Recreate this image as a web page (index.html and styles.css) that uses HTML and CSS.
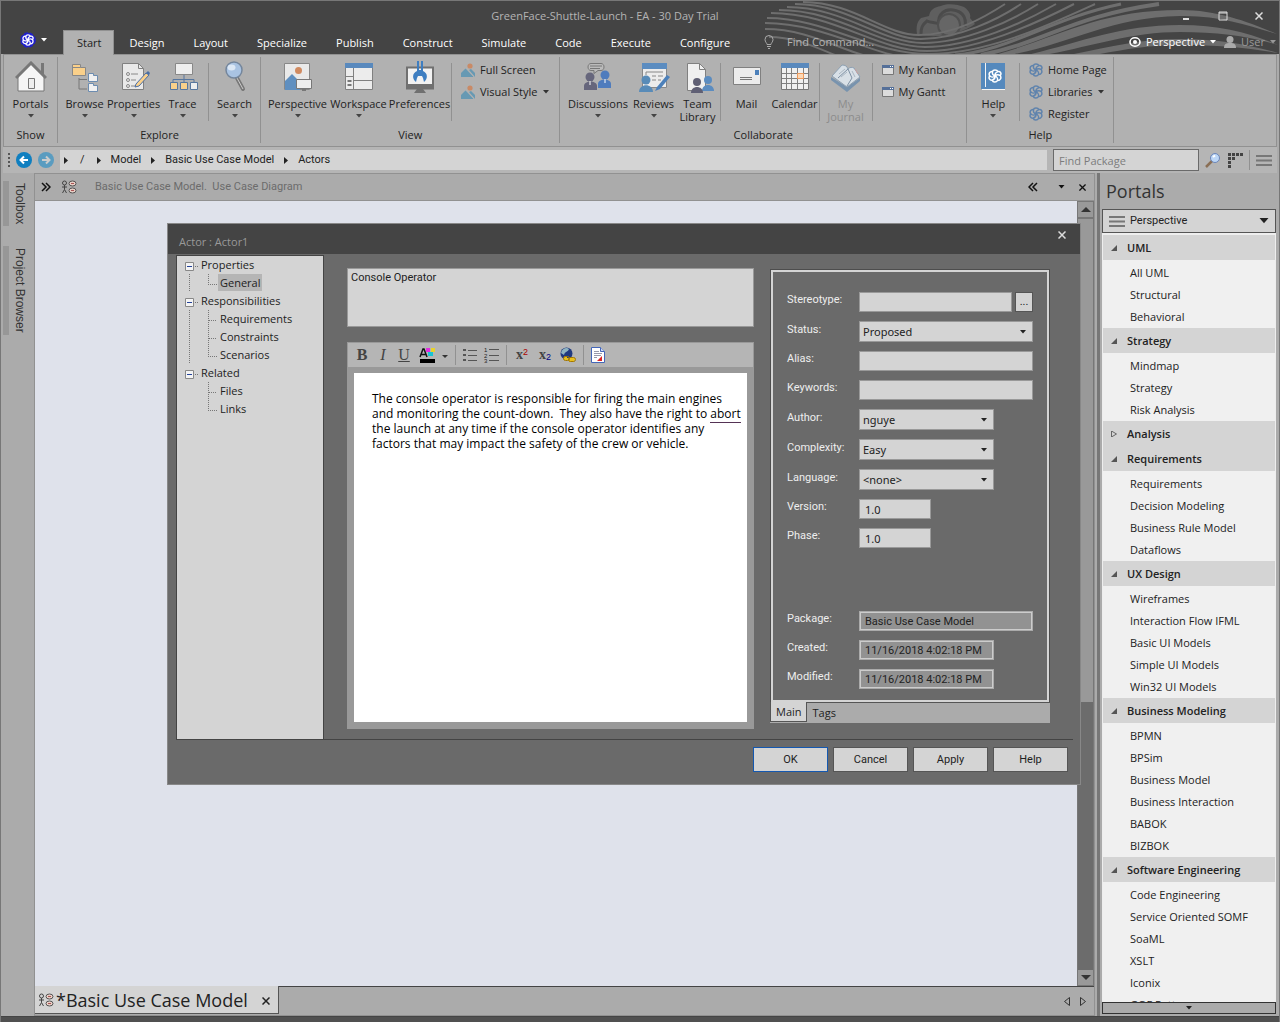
FILE: index.html
```html
<!DOCTYPE html>
<html lang="en">
<head>
<meta charset="utf-8">
<title>GreenFace-Shuttle-Launch - EA - 30 Day Trial</title>
<link rel="stylesheet" href="styles.css">
</head>
<body>
<svg class="defs" aria-hidden="true">
  <symbol id="down" viewBox="0 0 6 4"><path d="M0 0h6L3 3.5z" fill="currentColor"/></symbol>
  <symbol id="right" viewBox="0 0 4 7"><path d="M0 0l4 3.5L0 7z" fill="currentColor"/></symbol>
  <symbol id="close" viewBox="0 0 8 8"><path d="M.5.5l7 7M7.5.5l-7 7" stroke="currentColor" stroke-width="1.5" fill="none"/></symbol>
  <symbol id="lines" viewBox="0 0 16 11"><path d="M0 1h16M0 5.5h16M0 10h16" stroke="#777" stroke-width="2"/></symbol>
  <symbol id="knot" viewBox="0 0 14 14">
    <g fill="none" stroke="currentColor" stroke-width="1.5">
      <path d="M4.500 2.500C5 .5 9 .5 9.800 2.600 12.500 2 13.800 4.500 12.300 6.500c1.400 2.500 0 5.200-2.800 5-1.200 2.200-4.600 2-5.200-.3C1.400 11.500.3 8.800 1.700 7 .3 4.600 1.800 2.200 4.500 2.500z"/>
      <path d="M4.500 2.500C4 5 5.500 6.500 7 7s3 2.500 2.500 4.500M12.300 6.500C9.500 5 8 6 7 7s-3.500 1.500-5.300 0M9.800 2.600C7.500 3.500 6.800 5.500 7 7s-1 3.500-2.700 4.200"/>
    </g>
  </symbol>
  <symbol id="picture" viewBox="0 0 14 14">
    <circle cx="9" cy="3" r="2.600" fill="#c98a66"/><path d="M0 14V10l4.500-4.500L13 14z" fill="#6799b3"/><path d="M8 7l2-1 4 4v4z" fill="#6799b3"/><path d="M7 7l6 7" stroke="#b1b1b1"/>
  </symbol>
  <symbol id="pane" viewBox="0 0 12 10"><path d="M.5.5h11v9H.5z" fill="#dcdcdc" stroke="#777"/><path d="M0 0h12v3H0z" fill="#557099"/><path d="M8 1h1v1H8zM10 1h1v1h-1z" fill="#fff"/></symbol>
  <symbol id="usecase" viewBox="0 0 16 14"><g fill="none" stroke="#444"><circle cx="3.500" cy="3" r="2"/><path d="M3.500 5v4.500M1 7h5M3.500 9.500L1.500 13M3.500 9.500L5.500 13"/></g><g fill="#e8cfc6" stroke="#555"><ellipse cx="11.500" cy="3.500" rx="3.500" ry="2.500"/><ellipse cx="11.500" cy="10.500" rx="3.500" ry="2.500"/></g><path d="M10 3.500h3M10 10.500h3" stroke="#a55"/></symbol>
  <symbol id="open" viewBox="0 0 6 6"><path d="M6 0v6H0z" fill="#555"/></symbol>
  <symbol id="root" viewBox="0 0 24 18"><path d="M8.500 6.500h8v8h-8z" fill="#f4f4f4" stroke="#888"/><path d="M10 10.500h5" stroke="#24439a"/><path d="M18 10.500h1M20 10.500h1" stroke="#777"/></symbol>
  <symbol id="vline" viewBox="0 0 24 18"><path d="M12.500 0v18" stroke="#777" stroke-dasharray="1 1"/></symbol>
  <symbol id="tee" viewBox="0 0 17 18"><path d="M7.500 0v18M8 10.500h8" stroke="#777" stroke-dasharray="1 1"/></symbol>
  <symbol id="elbow" viewBox="0 0 17 18"><path d="M7.500 0v10M7 10.500h9" stroke="#777" stroke-dasharray="1 1"/></symbol>
</svg>

<div class="window">
  <header class="titlebar">
    <svg class="swirl" viewBox="0 0 520 54" preserveAspectRatio="xMaxYMin slice" aria-hidden="true">
      <path d="M158 33c-1-8 0-12 4-16l8-2c1-6 5-9 12-10 5-3 17-2 23 1 6 4 7 9 6 11l5 6c-12 9-38 16-58 10z" fill="#5f5f5f"/>
      <path d="M162 33c0-6 1-9 6-13 4 2 8 1 12 3-2-10 6-15 14-14s14 6 12 17" fill="none" stroke="#4b4b4b" stroke-width="3"/>
      <circle cx="190" cy="24" r="11" fill="#666" stroke="#505050" stroke-width="2"/>
      <g fill="none" stroke="#6e6e6e">
        <g stroke-width="2">
          <path d="M44 1C95 1 125 34 160 34S226 16 246 3"/>
          <path d="M36 3C90 3 125 38 162 38S240 18 262 3"/>
          <path d="M28 6C85 6 122 42 164 42S252 20 279 3"/>
          <path d="M20 9C80 9 120 46 166 46S264 22 297 3"/>
          <path d="M12 12C75 12 118 50 168 50S278 22 315 3"/>
          <path d="M8 17C68 17 112 53 170 53S290 24 336 3"/>
          <path d="M6 22C56 22 100 46 134 54M6 28C46 28 76 46 104 54M10 36C36 36 56 46 76 54"/>
        </g>
        <path d="M196 54C250 50 290 18 362 3" stroke-width="3"/>
        <path d="M222 54C290 40 310 16 400 3" stroke-width="4"/>
      </g>
      <g fill="#6e6e6e">
        <path d="M236 54C300 36 340 9 421 9 460 9 492 22 518 33 490 25 460 14 421 15 350 16 310 44 250 54z"/>
        <path d="M268 54C320 42 360 24 421 24c40 0 70 8 98 20-30-9-60-13-98-13-50 0-90 15-136 23z"/>
        <path d="M310 54c40-8 70-16 111-16 40 0 70 6 98 14-30-5-60-8-98-8-30 0-60 5-85 10z"/>
      </g>
    </svg>
    <div class="caption">
      <h1>GreenFace-Shuttle-Launch - EA - 30 Day Trial</h1>
      <div class="winbtns">
        <button aria-label="Minimize"><svg width="10" height="10"><path d="M2 8h6" stroke="#ddd" stroke-width="2"/></svg></button>
        <button aria-label="Maximize"><svg width="10" height="10"><path d="M1 1h8v8H1zM1 2h8" stroke="#ddd" fill="none"/></svg></button>
        <button aria-label="Close"><svg width="8" height="8"><use href="#close"/></svg></button>
      </div>
    </div>
    <nav class="tabs">
      <button class="app" aria-label="Application menu"><svg width="16" height="16" viewBox="0 0 16 16"><circle cx="8" cy="8" r="7" fill="#1d1dd6"/><circle cx="8" cy="8" r="7.300" fill="none" stroke="#1d1dd6" stroke-dasharray="4 2"/><use href="#knot" x="2" y="2" width="12" height="12" color="#fff"/></svg><svg width="6" height="4"><use href="#down"/></svg></button>
      <button class="tab active">Start</button><button class="tab">Design</button><button class="tab">Layout</button><button class="tab">Specialize</button><button class="tab">Publish</button><button class="tab">Construct</button><button class="tab">Simulate</button><button class="tab">Code</button><button class="tab">Execute</button><button class="tab">Configure</button>
      <label class="findcmd"><svg width="10" height="14" viewBox="0 0 10 14"><path d="M3 9.500C3 8 1 7 1 4.500a4 4 0 0 1 8 0C9 7 7 8 7 9.500z" fill="none" stroke="#aaa"/><path d="M3 11.500h4M4 13.500h2" stroke="#aaa"/></svg><input type="text" placeholder="Find Command..." aria-label="Find Command"></label>
      <div class="account">
        <button class="persp"><svg width="12" height="12" viewBox="0 0 12 12"><ellipse cx="6" cy="6" rx="5" ry="4.200" fill="none" stroke="#fff" stroke-width="1.600"/><circle cx="6" cy="6" r="2" fill="#fff"/></svg>Perspective<svg width="6" height="4"><use href="#down"/></svg></button>
        <button class="user"><svg width="12" height="12" viewBox="0 0 12 12"><circle cx="6" cy="3.500" r="3.500" fill="#aaa"/><path d="M0 12c0-4 2-5 6-5s6 1 6 5z" fill="#aaa"/></svg>User<svg width="6" height="4"><use href="#down"/></svg></button>
      </div>
    </nav>
  </header>

  <section class="ribbon">
    <div class="group">
      <div class="items">
        <button class="big"><svg width="32" height="32" viewBox="0 0 32 32"><path d="M26 2h3v12h-3z" fill="#777"/><path d="M3 16L16 3l13 13v14H3z" fill="#f5f5f5" stroke="#777"/><path d="M1 17L16 2l15 15" fill="none" stroke="#777" stroke-width="3"/><path d="M13.500 17.500h6v10h-6z" fill="#eee" stroke="#777"/></svg><span>Portals</span><svg class="ar"><use href="#down"/></svg></button>
      </div>
      <h2>Show</h2>
    </div>
    <div class="group">
      <div class="items">
        <button class="big"><svg width="32" height="32" viewBox="0 0 32 32"><path d="M10 17v11h8M10 18.500h8" fill="none" stroke="#777"/><path d="M3.500 14.500v-11h8v3h5v8z" fill="#fad08a" stroke="#888"/><path d="M3.500 6.500h8" stroke="#888"/><path d="M19.500 20.500v-8h5v2h4v6zM19.500 30.500v-8h5v2h4v6z" fill="#f0f0f0" stroke="#6c8cb0"/></svg><span>Browse</span><svg class="ar"><use href="#down"/></svg></button>
        <button class="big"><svg width="32" height="32" viewBox="0 0 32 32"><path d="M4.500 2.500h16l5 5v21h-21z" fill="#e9e9e9" stroke="#808080"/><path d="M20.500 2.500v5h5" fill="none" stroke="#808080"/><g stroke="#888" fill="none"><circle cx="10" cy="13" r="1.500"/><circle cx="10" cy="19" r="1.500"/><circle cx="10" cy="25" r="1.500"/><path d="M13 13h7M13 19h5M13 25h4"/></g><path d="M18 23l10-11 3 2-10 11-4 1z" fill="#fad08a" stroke="#4a6ea4"/><path d="M28 12l2-2 2 2-1 2z" fill="#4a6ea4"/></svg><span>Properties</span><svg class="ar"><use href="#down"/></svg></button>
        <button class="big"><svg width="32" height="32" viewBox="0 0 32 32"><path d="M8.500 2.500h17v11h-17z" fill="#eee" stroke="#888"/><path d="M17 14v7M6 21v-2.500h21V21" fill="none" stroke="#58779f"/><path d="M3.500 21.500h7v7h-7zM13.500 21.500h7v7h-7z" fill="#fad08a" stroke="#58779f"/><path d="M23.500 21.500h7v7h-7z" fill="#eee" stroke="#58779f"/></svg><span>Trace</span><svg class="ar"><use href="#down"/></svg></button>
        <i class="sep"></i>
        <button class="big"><svg width="32" height="32" viewBox="0 0 32 32"><path d="M18 17l6 11" stroke="#777" stroke-width="4" stroke-linecap="round"/><path d="M18 17l6 11" stroke="#ccc" stroke-width="1"/><circle cx="15" cy="9" r="8" fill="#a9c3e2" stroke="#74869c" stroke-width="1.500"/><ellipse cx="12.500" cy="6.500" rx="4" ry="3" fill="#dce8f5"/></svg><span>Search</span><svg class="ar"><use href="#down"/></svg></button>
      </div>
      <h2>Explore</h2>
    </div>
    <div class="group">
      <div class="items wide">
        <button class="big"><svg width="32" height="32" viewBox="0 0 32 32"><path d="M2.500 2.500h25v26h-25z" fill="#e9e9e9" stroke="#888"/><circle cx="16.500" cy="9.500" r="3.500" fill="#d08a60"/><path d="M3 29V20l7-7 8 8v8z" fill="#5f8fc0"/><path d="M14.500 18.500h15v9h-15z" fill="#eee" stroke="#777"/><path d="M20 28h4v2h-4z" fill="#777"/></svg><span>Perspective</span><svg class="ar"><use href="#down"/></svg></button>
        <button class="big"><svg width="32" height="32" viewBox="0 0 32 32"><path d="M2.500 2.500h27v26h-27z" fill="#ececec" stroke="#808080"/><path d="M2 2h28v5H2z" fill="#5989bd"/><path d="M10.500 7v21M3 15.500h7M11 19.500h18" stroke="#808080"/><path d="M4.500 20h4M4.500 24h4" stroke="#777" stroke-width="2"/></svg><span>Workspace</span><svg class="ar"><use href="#down"/></svg></button>
        <button class="big"><svg width="32" height="32" viewBox="0 0 32 32"><path d="M3 6.500h26v21H3z" fill="#f2f2f2" stroke="#707070" stroke-width="2"/><path d="M2 23h28v5H2zM13 28h6l3 4H10z" fill="#707070"/><path d="M13 0h2v9h2V0h2v10c5 2 5 8 1 11l-1-4-1-2h-4l-1 2-1 4c-4-3-4-9 1-11z" fill="#3e7ec1"/></svg><span>Preferences</span></button>
        <i class="sep"></i>
        <div class="list"><button><svg width="14" height="14"><use href="#picture"/></svg>Full Screen</button><button><svg width="14" height="14"><use href="#picture"/></svg>Visual Style<svg width="6" height="4"><use href="#down"/></svg></button></div>
      </div>
      <h2>View</h2>
    </div>
    <div class="group">
      <div class="items wide">
        <button class="big w65"><svg width="32" height="32" viewBox="0 0 32 32"><path d="M9 2.500h10c4 0 4 7 0 7h-3l-4 3v-3H9c-4 0-4-7 0-7z" fill="#bbb" stroke="#777"/><path d="M8 5h12M8 7.500h10" stroke="#777"/><circle cx="8" cy="16" r="4.500" fill="#66667c"/><path d="M2 29v-4c0-6 13-6 13 0v4z" fill="#66667c"/><circle cx="23" cy="14" r="4.500" fill="#4f7cbd"/><path d="M16 27v-4c0-6 13-6 13 0v4z" fill="#4f7cbd"/><path d="M8 20v4M23 18v4" stroke="#fff"/></svg><span>Discussions</span><svg class="ar"><use href="#down"/></svg></button>
        <button class="big w46"><svg width="32" height="32" viewBox="0 0 32 32"><path d="M4.500 2.500h24v24h-24z" fill="#ececec" stroke="#888"/><path d="M4 2h25v6H4z" fill="#5b8cc0"/><path d="M8 11h17M14 15h4M20 15h5M14 19h4M20 19h3M8 11v3" stroke="#888"/><circle cx="8" cy="19" r="4.500" fill="#588bb8"/><path d="M1 31c0-9 14-9 14 0z" fill="#588bb8"/><path d="M19 26L29 14l3 2-10 12-5 2z" fill="#4c80ba"/></svg><span>Reviews</span><svg class="ar"><use href="#down"/></svg></button>
        <button class="big w42"><svg width="32" height="32" viewBox="0 0 32 32"><path d="M5.500 2.500h12l6 6v21h-18z" fill="#f0f0f0" stroke="#808080"/><path d="M17.500 2.500v6h6" fill="none" stroke="#808080"/><circle cx="26" cy="19" r="4" fill="#5b8cc0"/><path d="M20 30c0-8 12-8 12 0z" fill="#5b8cc0"/><circle cx="15" cy="21" r="4" fill="#5f5f74"/><path d="M9 32c0-8 12-8 12 0z" fill="#5f5f74"/></svg><span>Team<br>Library</span></button>
        <i class="sep"></i>
        <button class="big w50"><svg width="32" height="32" viewBox="0 0 32 32"><path d="M2.500 6.500h27v17h-27z" fill="#ececec" stroke="#808080"/><path d="M24 9h4v5h-4z" fill="#4c80ba"/><path d="M9 16.500h12M9 18.500h12" stroke="#777"/></svg><span>Mail</span></button>
        <button class="big w46"><svg width="32" height="32" viewBox="0 0 32 32"><path d="M2.500 2.500h27v26h-27z" fill="#f0f0f0" stroke="#777"/><path d="M2 2h28v5H2z" fill="#5989bd"/><path d="M7.500 7v21M12.500 7v21M18.500 7v21M24.500 7v21M3 12.500h26M3 17.500h26M3 22.500h26" stroke="#808080"/><path d="M18.500 12.500h6v5h-6z" fill="#fbd9b8" stroke="#f09a5b"/></svg><span>Calendar</span></button>
        <i class="sep"></i>
        <button class="big w50" disabled><svg width="32" height="32" viewBox="0 0 32 32"><path d="M1 16l16 10 13-9v3L17 31 1 19z" fill="#7893ae"/><path d="M2 15L12 4c3 0 5 1 6 4 2-2 4-2 6-1l6 9-13 10z" fill="#d8e0e7" stroke="#8da0b2"/><path d="M18 8L8 17M18 8l4 9-5 8" fill="none" stroke="#7d90a4"/><path d="M9 13l6-5M11 16l6-5M22 10l3 6" stroke="#a9b6c2"/><path d="M25 8l3 5" stroke="#c9a0a0"/></svg><span>My<br>Journal</span></button>
        <i class="sep"></i>
        <div class="list"><button><svg width="12" height="10"><use href="#pane"/></svg>My Kanban</button><button><svg width="12" height="10"><use href="#pane"/></svg>My Gantt</button></div>
      </div>
      <h2>Collaborate</h2>
    </div>
    <div class="group">
      <div class="items">
        <button class="big"><svg width="32" height="32" viewBox="0 0 32 32"><path d="M4 2h24v26H4z" fill="#5589bd"/><path d="M8.500 2v24M5 28.500h23" stroke="#f4f4f4"/><use href="#knot" x="11" y="8" width="14" height="14" color="#fff"/></svg><span>Help</span><svg class="ar"><use href="#down"/></svg></button>
        <i class="sep"></i>
        <div class="list knots"><button><svg width="14" height="14"><use href="#knot"/></svg>Home Page</button><button><svg width="14" height="14"><use href="#knot"/></svg>Libraries<svg width="6" height="4"><use href="#down"/></svg></button><button><svg width="14" height="14"><use href="#knot"/></svg>Register</button></div>
      </div>
      <h2>Help</h2>
    </div>
  </section>

  <div class="navrow">
    <i class="grip"></i>
    <button aria-label="Back"><svg width="16" height="16"><circle cx="8" cy="8" r="8" fill="#0f7fc0"/><path d="M12 8H4.500M8 4.500L4.500 8 8 11.500" stroke="#fff" stroke-width="2" fill="none"/></svg></button>
    <button aria-label="Forward"><svg width="16" height="16"><circle cx="8" cy="8" r="8" fill="#5a9cc0"/><path d="M4 8h7.500M8 4.500L11.500 8 8 11.500" stroke="#ccc" stroke-width="2" fill="none"/></svg></button>
    <nav class="crumbs">
      <svg width="4" height="7"><use href="#right"/></svg><a href="#" class="slash">/</a><svg width="4" height="7"><use href="#right"/></svg><a href="#">Model</a><svg width="4" height="7"><use href="#right"/></svg><a href="#">Basic Use Case Model</a><svg width="4" height="7"><use href="#right"/></svg><a href="#">Actors</a>
    </nav>
    <input class="findpkg" type="text" placeholder="Find Package" aria-label="Find Package">
    <button aria-label="Search"><svg width="16" height="16"><path d="M1 15l6-6" stroke="#8a6f55" stroke-width="2.500"/><circle cx="10" cy="6" r="4.500" fill="#bcd6f6" stroke="#6c86b8"/><path d="M8 5l2-1.500" stroke="#fff" stroke-width="2"/></svg></button>
    <button aria-label="Options"><svg width="16" height="16"><path d="M1 2.500h15" stroke="#444" stroke-width="3" stroke-dasharray="3 1"/><path d="M2.500 5v11" stroke="#444" stroke-width="3" stroke-dasharray="3 1"/><path d="M5 6.500h3" stroke="#444" stroke-width="3"/></svg></button>
    <i class="vsep"></i>
    <button aria-label="Menu"><svg width="16" height="11"><use href="#lines"/></svg></button>
  </div>

  <div class="main">
    <aside class="dock"><button>Toolbox</button><button>Project Browser</button></aside>

    <section class="center">
      <div class="dochead">
        <svg width="10" height="10"><path d="M1 1l4 4-4 4M5 1l4 4-4 4" fill="none" stroke="#111" stroke-width="1.500"/></svg>
        <svg width="16" height="14"><use href="#usecase"/></svg>
        <span class="doctitle">Basic Use Case Model.&nbsp; Use Case Diagram</span>
        <div class="doctools">
        <button aria-label="Collapse"><svg width="10" height="10"><path d="M5 1L1 5l4 4M9 1L5 5l4 4" fill="none" stroke="#111" stroke-width="1.500"/></svg></button>
        <button aria-label="Windows"><svg width="7" height="4"><use href="#down"/></svg></button>
        <button aria-label="Close diagram"><svg width="7" height="7"><use href="#close"/></svg></button>
        </div>
      </div>
      <div class="canvas">
        <div class="scroll">
          <button aria-label="Scroll up"><svg width="10" height="5"><path d="M0 5l5-5 5 5z" fill="#333"/></svg></button>
          <i class="thumb"></i><i class="trough"></i>
          <button aria-label="Scroll down"><svg width="10" height="5"><path d="M0 0l5 5 5-5z" fill="#333"/></svg></button>
        </div>
      </div>
      <div class="doctabs">
        <button class="doctab"><svg width="16" height="14"><use href="#usecase"/></svg><span>*Basic Use Case Model</span><svg width="8" height="8"><use href="#close"/></svg></button>
        <button aria-label="Previous tab"><svg width="6" height="9"><path d="M5.500.5v8l-5-4z" fill="none" stroke="#333"/></svg></button>
        <button aria-label="Next tab"><svg width="6" height="9"><path d="M.5.5v8l5-4z" fill="none" stroke="#333"/></svg></button>
      </div>

      <form class="dialog" role="dialog" aria-label="Actor : Actor1">
        <div class="dlgtitle"><h2>Actor : Actor1</h2><button type="button" aria-label="Close dialog"><svg width="8" height="8"><use href="#close"/></svg></button></div>
        <div class="dlgbody">
          <ul class="tree">
            <li><svg class="g1"><use href="#root"/></svg>Properties</li>
            <li><svg class="g1"><use href="#vline"/></svg><svg class="g2"><use href="#elbow"/></svg><b class="sel">General</b></li>
            <li><svg class="g1"><use href="#root"/></svg>Responsibilities</li>
            <li><svg class="g1"><use href="#vline"/></svg><svg class="g2"><use href="#tee"/></svg><b>Requirements</b></li>
            <li><svg class="g1"><use href="#vline"/></svg><svg class="g2"><use href="#tee"/></svg><b>Constraints</b></li>
            <li><svg class="g1"><use href="#vline"/></svg><svg class="g2"><use href="#elbow"/></svg><b>Scenarios</b></li>
            <li><svg class="g1"><use href="#root"/></svg>Related</li>
            <li><svg class="g1"></svg><svg class="g2"><use href="#tee"/></svg><b>Files</b></li>
            <li><svg class="g1"></svg><svg class="g2"><use href="#elbow"/></svg><b>Links</b></li>
          </ul>
          <div class="mid">
            <textarea class="name" aria-label="Name">Console Operator</textarea>
            <div class="editor">
              <div class="toolbar">
                <button type="button" class="tb bold">B</button><button type="button" class="tb ital">I</button><button type="button" class="tb und">U</button>
                <button type="button" aria-label="Text colour"><svg width="30" height="16"><path d="M2 10l3-8h1l3 8M3 7.500h5" fill="none" stroke="#111" stroke-width="1.500"/><path d="M2 12h15v4H2z" fill="#000"/><path d="M8 1h4v4H8z" fill="#e12ee1"/><path d="M13 1h4v4h-4z" fill="#e8d22c"/><path d="M10 5h5v4h-5z" fill="#19c5d3"/><path d="M24 8h6l-3 3z" fill="#333"/></svg></button>
                <i class="tsep"></i>
                <button type="button" aria-label="Bullets"><svg width="14" height="14"><path d="M0 2h3M0 7h3M0 12h3" stroke="#555" stroke-width="2"/><path d="M5 2.500h9M5 7.500h9M5 12.500h9" stroke="#555"/></svg></button>
                <button type="button" aria-label="Numbering"><svg width="15" height="16"><text x="0" y="5" class="num">1</text><text x="0" y="11" class="num">2</text><text x="0" y="16" class="num">3</text><path d="M5 2.500h10M5 8.500h10M5 13.500h10" stroke="#555"/></svg></button>
                <i class="tsep"></i>
                <button type="button" class="tb scr">x<sup>2</sup></button><button type="button" class="tb scr sub">x<sub>2</sub></button>
                <button type="button" aria-label="Hyperlink"><svg width="16" height="16"><circle cx="6.500" cy="6.500" r="6" fill="#203a80"/><path d="M1 6c1-5 6-6 8-4-1 3-4 2-5 6z" fill="#8fb4c0"/><path d="M4 12h11M4 10.500h3M9 14h5" stroke="#e8c020" stroke-width="2"/><rect x="3.500" y="9.500" width="6" height="4" rx="2" fill="none" stroke="#a47800"/><rect x="8.500" y="10.500" width="7" height="4" rx="2" fill="none" stroke="#a47800"/></svg></button>
                <i class="tsep"></i>
                <button type="button" aria-label="Glossary"><svg width="14" height="16"><path d="M.5.500h9l4 4v11H.5z" fill="#fff" stroke="#4466b8"/><path d="M9.500.5v4h4" fill="#cdd8f2" stroke="#4466b8"/><path d="M3 4.500h5M3 6.500h8M3 8.500h7M3 10.500h3" stroke="#99a"/><path d="M6 14l5-5v5z" fill="#d22"/></svg></button>
              </div>
              <div class="page" contenteditable="true" spellcheck="false">The console operator is responsible for firing the main engines<br>and monitoring the count-down.&nbsp; They also have the right to <u>abort</u><br>the launch at any time if the console operator identifies any<br>factors that may impact the safety of the crew or vehicle.</div>
            </div>
          </div>
          <div class="props">
            <div class="panel">
              <div class="fields">
                <label for="st">Stereotype:</label><div class="pair"><input id="st" type="text"><button type="button" aria-label="Choose stereotype">...</button></div>
                <label for="su">Status:</label><div class="select"><select id="su"><option>Proposed</option></select><svg><use href="#down"/></svg></div>
                <label for="al">Alias:</label><input id="al" type="text">
                <label for="ke">Keywords:</label><input id="ke" type="text">
                <label for="au">Author:</label><div class="select mw"><select id="au"><option>nguye</option></select><svg><use href="#down"/></svg></div>
                <label for="co">Complexity:</label><div class="select mw"><select id="co"><option>Easy</option></select><svg><use href="#down"/></svg></div>
                <label for="la">Language:</label><div class="select mw"><select id="la"><option>&lt;none&gt;</option></select><svg><use href="#down"/></svg></div>
                <label for="ve">Version:</label><input id="ve" class="sw" type="text" value="1.0">
                <label for="ph">Phase:</label><input id="ph" class="sw" type="text" value="1.0">
              </div>
              <div class="fields ro">
                <label for="pa">Package:</label><input id="pa" type="text" readonly value="Basic Use Case Model">
                <label for="cr">Created:</label><input id="cr" class="mw" type="text" readonly value="11/16/2018 4:02:18 PM">
                <label for="mo">Modified:</label><input id="mo" class="mw" type="text" readonly value="11/16/2018 4:02:18 PM">
              </div>
            </div>
            <div class="ptabs"><button type="button" class="on">Main</button><button type="button">Tags</button></div>
          </div>
        </div>
        <div class="actions"><button type="button" class="default">OK</button><button type="button">Cancel</button><button type="button">Apply</button><button type="button">Help</button></div>
      </form>
    </section>

    <aside class="portals">
      <h2>Portals</h2>
      <button class="combo"><svg width="16" height="11"><use href="#lines"/></svg><span>Perspective</span><svg width="10" height="6"><use href="#down"/></svg></button>
      <div class="plist">
        <h3><svg><use href="#open"/></svg>UML</h3>
        <ul><li><a href="#">All UML</a></li><li><a href="#">Structural</a></li><li><a href="#">Behavioral</a></li></ul>
        <h3><svg><use href="#open"/></svg>Strategy</h3>
        <ul><li><a href="#">Mindmap</a></li><li><a href="#">Strategy</a></li><li><a href="#">Risk Analysis</a></li></ul>
        <h3><svg viewBox="0 0 6 6"><path d="M.5 0v6l5-3z" fill="none" stroke="#666"/></svg>Analysis</h3>
        <h3><svg><use href="#open"/></svg>Requirements</h3>
        <ul><li><a href="#">Requirements</a></li><li><a href="#">Decision Modeling</a></li><li><a href="#">Business Rule Model</a></li><li><a href="#">Dataflows</a></li></ul>
        <h3><svg><use href="#open"/></svg>UX Design</h3>
        <ul><li><a href="#">Wireframes</a></li><li><a href="#">Interaction Flow IFML</a></li><li><a href="#">Basic UI Models</a></li><li><a href="#">Simple UI Models</a></li><li><a href="#">Win32 UI Models</a></li></ul>
        <h3><svg><use href="#open"/></svg>Business Modeling</h3>
        <ul><li><a href="#">BPMN</a></li><li><a href="#">BPSim</a></li><li><a href="#">Business Model</a></li><li><a href="#">Business Interaction</a></li><li><a href="#">BABOK</a></li><li><a href="#">BIZBOK</a></li></ul>
        <h3><svg><use href="#open"/></svg>Software Engineering</h3>
        <ul><li><a href="#">Code Engineering</a></li><li><a href="#">Service Oriented SOMF</a></li><li><a href="#">SoaML</a></li><li><a href="#">XSLT</a></li><li><a href="#">Iconix</a></li><li><a href="#">GOF Patterns</a></li></ul>
      </div>
      <button class="more" aria-label="Scroll list down"><svg width="6" height="4"><use href="#down"/></svg></button>
    </aside>
  </div>
  <footer class="status"></footer>
</div>
</body>
</html>
```
FILE: styles.css
```css
* { box-sizing: border-box; }
body { margin: 0; font: 11px/14px "Open Sans", "Noto Sans", sans-serif; color: #222; background: #ababab; }
.defs { position: absolute; width: 0; height: 0; }
h1, h2, h3, ul { margin: 0; padding: 0; font: inherit; list-style: none; }
button, input, select, textarea { font: inherit; color: inherit; margin: 0; padding: 0; border: 0; background: none; border-radius: 0; outline: 0; }
button { display: flex; align-items: center; justify-content: center; }
a { color: inherit; text-decoration: none; }
svg { flex: none; display: block; }

.window { height: 100vh; display: flex; flex-direction: column; border: 1px solid #777; border-bottom: 0; overflow: hidden; }

/* title bar and ribbon tabs */
.titlebar { position: relative; background: #444; flex: none; }
.swirl { position: absolute; right: 0; top: 0; width: 520px; height: 53px; }
.caption, .tabs { position: relative; display: flex; }
.caption { height: 29px; align-items: center; justify-content: center; color: #b4b4b4; }
.caption h1 { flex: 1; text-align: center; padding-left: 28px; }
.winbtns { display: flex; gap: 27px; padding-right: 16px; }
.winbtns button { color: #ddd; }
.tabs { height: 24px; align-items: center; color: #fff; }
.app { width: 62px; gap: 5px; padding: 0 0 4px 2px; }
.tab { height: 24px; padding: 0 13px 0 14px; border: 1px solid transparent; border-bottom: 0; }
.tab.active { background: #b1b1b1; color: #222; padding: 0 12px 0 13px; border-color: #919191; height: 25px; margin-bottom: -1px; }
.findcmd { display: flex; gap: 13px; align-items: center; margin-left: 20px; }
.findcmd input { width: 100px; }
.findcmd ::placeholder { color: #b4b4b4; opacity: 1; }
.account { margin-left: auto; display: flex; gap: 8px; padding-right: 3px; }
.account button { gap: 5px; }
.account .user { color: #999; }

/* ribbon */
.ribbon { flex: none; display: flex; background: #b1b1b1; border: 1px solid #919191; margin: 0 2px; height: 93px; padding: 2px 0 3px; color: #222; }
.group { border-right: 1px solid #919191; display: flex; flex-direction: column; justify-content: space-between; padding: 4px 1px 1px 2px; }
.group:first-child { padding-right: 2px; }
.group h2 { text-align: center; }
.items { display: flex; align-items: flex-start; }
.items.wide { padding: 0 4px; }
.big { flex: none; flex-direction: column; width: 49px; white-space: nowrap; }
.wide .big { width: 61px; }
.wide .w65 { width: 65px; }
.wide .w50 { width: 50px; }
.wide .w46 { width: 46px; }
.wide .w42 { width: 42px; }
.big span { line-height: 13px; margin-top: 4px; }
.big:disabled { color: #8c8c8c; }
.ar { width: 6px; height: 4px; margin-top: 4px; color: #444; }
.sep { width: 1px; height: 58px; margin: 2px 1px; background: #919191; }
.list { display: flex; flex-direction: column; margin-top: -2px; padding: 0 5px 0 8px; }
.list button { height: 22px; justify-content: flex-start; gap: 5px; }
.list svg { color: #333; }
.list.knots svg:first-child { color: #5f83ad; }

/* navigation row */
.navrow { flex: none; display: flex; align-items: center; height: 26px; margin: 0 2px; padding: 0 5px; gap: 6px; background: #b5b5b5; }
.grip { width: 2px; height: 14px; background: repeating-linear-gradient(#555 0 2px, transparent 2px 4px); }
.crumbs { flex: 1; display: flex; align-items: center; gap: 10px; height: 20px; background: #d4d4d4; padding-left: 4px; font-family: Roboto, sans-serif; color: #222; }
.slash { padding: 0 2px; }
.findpkg { width: 146px; height: 22px; border: 1px solid #6a6a6a; background: #d4d4d4; padding: 0 5px; }
.findpkg::placeholder { color: #7c7c7c; opacity: 1; }
.vsep { width: 1px; height: 20px; background: #919191; }

/* main area */
.main { flex: 1; min-height: 0; display: flex; background: #ababab; }
.dock { width: 33px; display: flex; flex-direction: column; gap: 20px; padding: 8px 0 0 2px; }
.dock button { writing-mode: vertical-rl; justify-content: flex-start; align-self: flex-start; border-left: 6px solid #979797; padding: 2px 4px; font: 12px/14px "Liberation Sans", sans-serif; color: #333; }
.center { position: relative; flex: 1; min-width: 0; display: flex; flex-direction: column; border: 1px solid #919191; border-bottom: 0; margin-right: 2px; }
.dochead { display: flex; align-items: center; height: 27px; padding: 0 8px 0 6px; gap: 10px; border-bottom: 1px solid #919191; color: #6b6b6b; }
.doctitle { flex: 1; padding-left: 8px; font: 11px/14px Roboto, sans-serif; }
.doctools { display: flex; gap: 14px; align-items: center; color: #111; }
.doctools button:first-child { margin-right: 6px; }
.canvas { flex: 1; display: flex; justify-content: flex-end; background: #dfe2eb; }
.scroll { width: 17px; display: flex; flex-direction: column; background: #6c6c6c; border: 1px solid #777; }
.scroll button { height: 15px; background: #999; }
.scroll .thumb { flex: 484; background: #999; border-top: 2px solid #777; }
.scroll .trough { flex: 268; }
.doctabs { display: flex; align-items: center; height: 30px; gap: 10px; padding-right: 8px; border-top: 1px solid #444; border-bottom: 1px solid #919191; }
.doctab { height: 28px; margin: -2px auto 0 0; background: #d4d4d4; border: 1px solid #555; border-width: 0 1px 1px 0; padding: 0 8px 0 3px; gap: 2px; font-size: 18px; line-height: 26px; }
.doctab svg:last-child { margin: 2px 0 0 12px; }

/* dialog */
.dialog { position: absolute; left: 132px; top: 49px; width: 914px; background: #6a6a6a; border: 1px solid #888; font: 11px/14px Roboto, sans-serif; }
.dlgtitle { display: flex; justify-content: space-between; height: 30px; background: #444; color: #999; padding: 6px 14px 0 11px; font: 11px/14px "Open Sans", sans-serif; }
.dlgtitle h2 { padding-top: 5px; }
.dlgtitle button { height: 10px; color: #ddd; }
.dlgbody { display: flex; margin: 1px 7px 0 8px; border-bottom: 1px solid #444; }
.tree { flex: none; width: 148px; border: 1px solid #444; border-bottom: 0; background: #d4d4d4; font: 11px/18px "Open Sans", sans-serif; }
.tree li { display: flex; height: 18px; }
.tree b { font-weight: normal; padding: 0 2px; height: 17px; }
.tree .sel { background: #b5b5b5; }
.g1 { width: 24px; height: 18px; }
.g2 { width: 17px; height: 18px; }
.mid { flex: 1; min-width: 0; margin: 13px 16px 10px 23px; display: flex; flex-direction: column; gap: 15px; }
.name { height: 59px; resize: none; background: #d4d4d4; border: 1px solid #999; padding: 2px 3px; display: block; }
.editor { display: flex; flex-direction: column; flex: 1; background: #999; border: 1px solid #999; }
.toolbar { display: flex; align-items: center; height: 24px; padding: 0 7px; gap: 7px; background: #b5b5b5; color: #444; }
.tb { font: 16px/20px "Liberation Serif", serif; width: 14px; }
.bold { font-weight: bold; }
.ital { font-style: italic; }
.und { text-decoration: underline; }
.scr { font-size: 14px; font-weight: bold; line-height: 14px; width: 16px; }
.scr sup, .scr sub { font: 9px/9px "Liberation Sans", sans-serif; }
.scr sup { color: #a00; align-self: flex-start; }
.scr sub { color: #008; align-self: flex-end; }
.num { font: 6px "Liberation Sans", sans-serif; fill: #222; }
.tsep { width: 1px; height: 20px; background: #919191; }
.page { flex: 1; margin: 6px; padding: 18px 0 0 18px; background: #fff; color: #000; font: 12px/15px "Open Sans", sans-serif; outline: 0; }
.page u { text-decoration: none; border-bottom: 1px solid #535; }
.props { flex: none; width: 280px; margin: 14px 23px 16px 0; display: flex; flex-direction: column; }
.panel { border: 1px solid #4d4d4d; box-shadow: inset 0 0 0 2px #d4d4d4; height: 434px; padding: 22px 16px 13px; display: flex; flex-direction: column; justify-content: space-between; }
.fields { display: grid; grid-template-columns: 72px 1fr; row-gap: 9px; align-items: center; }
.fields label { color: #eee; padding-bottom: 4px; }
.fields input { height: 20px; width: 100%; background: #d4d4d4; border: 1px solid #999; padding: 0 5px; font: 11px/14px "Noto Sans", sans-serif; }
.pair { display: flex; gap: 3px; }
.pair button { width: 18px; flex: none; background: #d4d4d4; border: 1px solid #555; }
.select { display: grid; align-items: center; }
.select select, .select svg { grid-area: 1 / 1; }
.select select { appearance: none; height: 21px; background: #d4d4d4; border: 1px solid #999; padding: 0 3px; font: 11px/14px "Noto Sans", sans-serif; }
.select svg { width: 6px; height: 4px; justify-self: end; margin-right: 7px; pointer-events: none; }
.fields .mw { width: 135px; }
.fields .sw { width: 72px; }
.ro.fields input { background: #929292; border-color: #aaa; box-shadow: inset 0 0 0 1px #ccc; font: 11px/14px Roboto, sans-serif; }
.ptabs { display: flex; height: 21px; background: #ababab; font: 11px/14px "Open Sans", sans-serif; margin-top: -1px; border-top: 1px solid #555; }
.ptabs button { padding: 0 6px; height: 19px; }
.ptabs .on { background: #d4d4d4; border: 1px solid #555; border-top: 0; padding: 0 4px 0 5px; margin-top: -1px; height: 20px; }
.actions { display: flex; justify-content: flex-end; gap: 5px; padding: 7px 12px 12px; }
.actions button { width: 75px; height: 25px; background: #d4d4d4; border: 1px solid #555; }
.actions .default { border-color: #1458b0; }

/* portals */
.portals { width: 182px; flex: none; display: flex; flex-direction: column; padding: 0 3px 2px 2px; border-left: 3px solid #777; }
.portals h2 { font-size: 18px; line-height: 26px; padding: 5px 4px; color: #333; }
.combo { flex: none; height: 24px; background: #d4d4d4; border: 1px solid #555; padding: 0 6px; gap: 5px; }
.combo span { flex: 1; text-align: left; font-family: Roboto, sans-serif; }
.plist { flex: 1; min-height: 0; overflow: hidden; background: #f0f0f0; border: 1px solid #eee; border-width: 2px 1px 0; }
.plist h3 { display: flex; align-items: center; gap: 10px; height: 25px; padding-left: 8px; background: #d4d4d4; font-weight: 600; }
.plist h3 svg { width: 6px; height: 6px; }
.plist ul { padding: 2px 0 0 27px; }
.plist li { line-height: 22px; }
.more { flex: none; height: 12px; border: 1px solid #333; }
.status { flex: none; height: 6px; background: #505050; border-top: 1px solid #444; }
```
